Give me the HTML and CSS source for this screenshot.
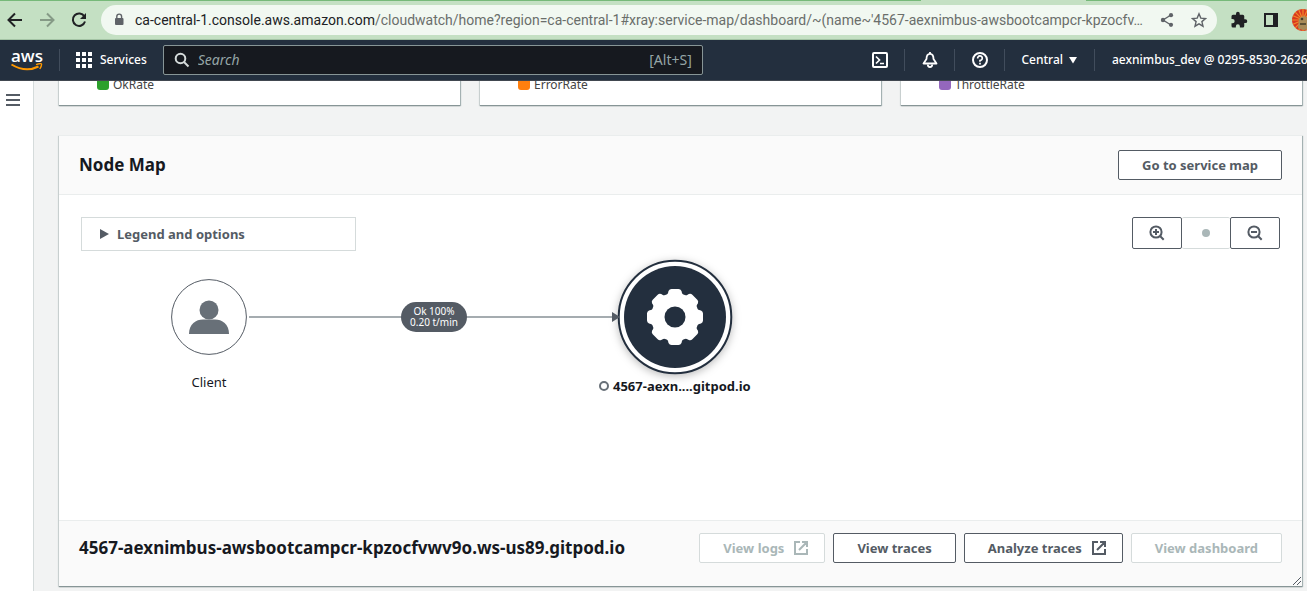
FILE: index.html
```html
<!DOCTYPE html>
<html lang="en">
<head>
<meta charset="utf-8">
<title>CloudWatch – Node Map</title>
<link rel="stylesheet" href="styles.css">
</head>
<body>
<div class="tabstrip"><span class="active-tab"></span></div>
<div class="toolbar">
  <button class="tool" aria-label="Back"><svg width="20" height="20" viewBox="0 0 20 20"><path d="M17 10H4M10 3.5 3.5 10l6.500 6.500" fill="none" stroke="#202124" stroke-width="2"/></svg></button>
  <button class="tool" aria-label="Forward"><svg width="20" height="20" viewBox="0 0 20 20"><path d="M3 10h13M10 3.500 16.500 10 10 16.500" fill="none" stroke="#859a86" stroke-width="2"/></svg></button>
  <button class="tool" aria-label="Reload"><svg width="20" height="20" viewBox="0 0 20 20"><path d="M15.400 6.500A6.200 6.200 0 1 0 16 11.500" fill="none" stroke="#202124" stroke-width="2"/><path d="M17 3v6h-6z" fill="#202124"/></svg></button>
  <div class="omnibox">
    <svg width="12" height="14" viewBox="0 0 12 14"><rect x="2" y="5" width="8.500" height="7" rx="1" fill="#5f6368"/><path d="M3.800 6V3.500a2.400 2.400 0 0 1 4.800 0V6" fill="none" stroke="#5f6368" stroke-width="1.400"/></svg>
    <a class="url" href="#"><span class="host">ca-central-1.console.aws.amazon.com</span>/cloudwatch/home?region=ca-central-1#xray:service-map/dashboard/~(name~'4567-aexnimbus-awsbootcampcr-kpzocfv…</a>
    <button class="tool" aria-label="Share"><svg width="16" height="16" viewBox="0 0 16 16" fill="#5f6368"><path d="M12 3 4 8l8 5" fill="none" stroke="#5f6368" stroke-width="1.400"/><circle cx="12" cy="3.200" r="2.100"/><circle cx="4" cy="8" r="2.200"/><circle cx="12" cy="12.800" r="2.100"/></svg></button>
    <button class="tool" aria-label="Bookmark"><svg width="16" height="16" viewBox="0 0 16 16"><path d="m8 1.800 1.800 4.300 4.700.4-3.600 3.100 1.100 4.600L8 11.800l-4 2.400 1.100-4.600L1.500 6.500l4.700-.4z" fill="none" stroke="#5f6368" stroke-width="1.400"/></svg></button>
  </div>
  <button class="tool" aria-label="Extensions"><svg width="18" height="18" viewBox="0 0 24 24"><path d="M20.500 11H19V7a2 2 0 0 0-2-2h-4V3.500a2.500 2.500 0 0 0-5 0V5H4a2 2 0 0 0-2 2v3.800h1.500a2.700 2.700 0 0 1 0 5.400H2V20a2 2 0 0 0 2 2h3.800v-1.500a2.700 2.700 0 0 1 5.400 0V22H17a2 2 0 0 0 2-2v-4h1.500a2.500 2.500 0 0 0 0-5" fill="#202124"/></svg></button>
  <button class="tool" aria-label="Side panel"><svg width="14" height="14" viewBox="0 0 14 14"><rect x="1" y="1" width="12" height="12" fill="none" stroke="#202124" stroke-width="2"/><path d="M9 1h4v12H9z" fill="#202124"/></svg></button>
  <button class="tool avatar" aria-label="Profile"><svg width="22" height="22" viewBox="0 0 22 22"><circle cx="11" cy="11" r="11" fill="#d9371f"/><g stroke="#f08a28" stroke-width="1.200"><path d="M11 0v22M0 11h22M3.200 3.200l15.600 15.600M18.800 3.200 3.200 18.800M6.800 1l8.400 20M15.200 1 6.800 21M1 6.800l20 8.400M1 15.200l20-8.400"/></g><path d="M7 10a5 5 0 0 1 9 0l1 9q-5 4-11 0z" fill="#a98b58"/><circle cx="10" cy="10" r="1.300" fill="#443b29"/><path d="M8 15h6" stroke="#5e5135" stroke-width="2"/></svg></button>
</div>

<header class="nav">
  <a class="logo" href="#" aria-label="AWS home"><span>aws</span><svg width="34" height="9" viewBox="0 0 34 9" fill="none" stroke="#ff9900"><path d="M1.500 1.500q14 8.500 27 2" stroke-width="2"/><path d="M26 1.600q5-1.600 5.500-.6t-1.700 5" stroke-width="1.400"/></svg></a>
  <button class="services"><svg width="16" height="16" viewBox="0 0 16 16" fill="#fff"><path d="M0 0h4v4H0zM6 0h4v4H6zM12 0h4v4h-4zM0 6h4v4H0zM6 6h4v4H6zM12 6h4v4h-4zM0 12h4v4H0zM6 12h4v4H6zM12 12h4v4h-4z"/></svg>Services</button>
  <label class="search"><svg width="16" height="16" viewBox="0 0 16 16" fill="none" stroke="#d5dbdb" stroke-width="2"><circle cx="6.500" cy="6.500" r="4.800"/><path d="m10 10 4.500 4.500"/></svg><input type="text" placeholder="Search" aria-label="Search"><span>[Alt+S]</span></label>
  <div class="nav-right">
    <button class="nav-icon" aria-label="CloudShell"><svg width="16" height="16" viewBox="0 0 16 16" fill="none" stroke="#fff" stroke-width="2"><rect x="1" y="1" width="14" height="14" rx="1"/><path d="M4 4.500 7.500 8 4 11.500M8 11.500h4" stroke-width="1.700"/></svg></button>
    <button class="nav-icon" aria-label="Notifications"><svg width="16" height="16" viewBox="0 0 16 16" fill="none" stroke="#fff" stroke-width="1.800" stroke-linejoin="round"><path d="M8 1.800C5.500 1.800 4.500 4 4.500 7L1.500 11.500h13L11.500 7c0-3-1-5.200-3.500-5.200z"/><path d="M8 0v2M5.800 12.500a2.200 2.500 0 0 0 4.400 0"/></svg></button>
    <button class="nav-icon" aria-label="Help"><svg width="16" height="16" viewBox="0 0 16 16" fill="none" stroke="#fff" stroke-width="2"><circle cx="8" cy="8" r="7"/><path d="M5.700 6.500A2.300 2.300 0 1 1 8 8.500v1.200M8 10.800v1.700" stroke-width="1.700"/></svg></button>
    <button class="region">Central<svg width="10" height="8" viewBox="0 0 10 8"><path d="M1 1h8L5 7.500z" fill="#fff"/></svg></button>
    <button class="account">aexnimbus_dev @ 0295-8530-2626</button>
  </div>
</header>

<div class="page">
  <aside class="side"><button aria-label="Open navigation"><svg width="14" height="12" viewBox="0 0 14 12"><path d="M0 1h14M0 6h14M0 11h14" stroke="#545b64" stroke-width="2"/></svg></button></aside>
  <main>
    <div class="metrics">
      <div class="metric"><i class="swatch green"></i>OkRate</div>
      <div class="metric"><i class="swatch orange"></i>ErrorRate</div>
      <div class="metric"><i class="swatch purple"></i>ThrottleRate</div>
    </div>
    <section class="panel">
      <div class="panel-head"><h2>Node Map</h2><button class="btn">Go to service map</button></div>
      <div class="map">
        <div class="map-tools">
          <button class="legend"><svg width="9" height="10" viewBox="0 0 9 10"><path d="M0 0v10l9-5z" fill="#545b64"/></svg>Legend and options</button>
          <div class="zoom">
            <button aria-label="Zoom in"><svg width="16" height="16" viewBox="0 0 16 16" fill="none" stroke="#545b64" stroke-width="2"><circle cx="7" cy="7" r="5.600"/><path d="m11 11 3.700 3.700M4 7h6M7 4v6"/></svg></button>
            <button class="reset" disabled aria-label="Reset zoom"><svg width="8" height="8"><circle cx="4" cy="4" r="4" fill="#aab7b8"/></svg></button>
            <button aria-label="Zoom out"><svg width="16" height="16" viewBox="0 0 16 16" fill="none" stroke="#545b64" stroke-width="2"><circle cx="7" cy="7" r="5.600"/><path d="m11 11 3.700 3.700M4 7h6"/></svg></button>
          </div>
        </div>
        <div class="node client">
          <svg width="76" height="76" viewBox="0 0 76 76"><circle cx="38" cy="38" r="37.400" fill="#fff" stroke="#545b64"/><g fill="#687078"><circle cx="38" cy="31" r="9.500"/><path d="M18 55c0-10 7-14.500 14-14.500h12c7 0 14 4.500 14 14.500z"/></g></svg>
          <span>Client</span>
        </div>
        <div class="node service">
          <svg width="124" height="124" viewBox="-62 -62 124 124"><circle r="56.300" fill="#fff" stroke="#232f3e" stroke-width="2"/><circle r="51" fill="#232f3e"/>
            <g fill="#fff"><circle r="24"/><g id="teeth"><path id="tooth" d="M-10-21q3-1 3.500-5 1-2 3-2h7q2 0 3 2 .5 4 3.500 5v42q-3 1-3.500 5-1 2-3 2h-7q-2 0-3-2-.5-4-3.500-5z"/><use href="#tooth" transform="rotate(90)"/></g><use href="#teeth" transform="rotate(45)"/></g><circle r="10.500" fill="#232f3e"/></svg>
          <strong><i></i>4567-aexn....gitpod.io</strong>
        </div>
        <svg class="edge" width="371" height="10" viewBox="0 0 371 10"><path d="M0 5h364" stroke="#879196" stroke-width="1.500"/><path d="M363 0v10l8-5z" fill="#545b64"/></svg>
        <div class="edge-label">Ok 100%<br>0.20 t/min</div>
      </div>
      <div class="panel-foot">
        <h2>4567-aexnimbus-awsbootcampcr-kpzocfvwv9o.ws-us89.gitpod.io</h2>
        <div class="actions">
          <button class="btn with-icon" disabled>View logs<svg width="14" height="14" viewBox="0 0 14 14" fill="none" stroke="currentColor" stroke-width="2"><path d="M6 1H1v12h12V8M8 1h5v5M13 1 5 9"/></svg></button>
          <button class="btn">View traces</button>
          <button class="btn with-icon">Analyze traces<svg width="14" height="14" viewBox="0 0 14 14" fill="none" stroke="currentColor" stroke-width="2"><path d="M6 1H1v12h12V8M8 1h5v5M13 1 5 9"/></svg></button>
          <button class="btn" disabled>View dashboard</button>
        </div>
      </div>
      <svg class="grip" width="8" height="8" viewBox="0 0 8 8"><path d="M0 8 8 0M4 8l4-4" stroke="#545b64"/></svg>
    </section>
  </main>
</div>
</body>
</html>
```

FILE: styles.css
```css
* { box-sizing: border-box; }
body {
  margin: 0;
  min-height: 100vh;
  display: flex;
  flex-direction: column;
  overflow: hidden;
  background: #f2f3f3;
  color: #16191f;
  font: 13px/20px "Noto Sans", sans-serif;
}
button { font: inherit; color: inherit; background: none; border: 0; padding: 0; }
svg { display: block; flex: none; }
h2 { margin: 0; font: 700 17px/24px "Noto Sans", sans-serif; }

.tabstrip { height: 1px; background: #76b979; display: flex; justify-content: flex-end; padding-right: 221px; }
.active-tab { width: 165px; background: #c4e0c3; }
.toolbar { height: 39px; display: flex; align-items: center; padding-left: 5px; background: #c4e0c3; border-bottom: 1px solid #a3c3a4; gap: 12px; }
.tool { display: grid; place-items: center; flex: none; width: 20px; height: 30px; }
.omnibox { flex: 1; min-width: 0; height: 30px; border-radius: 15px; background: #f1f8f1; display: flex; align-items: center; gap: 12px; padding: 0 8px 0 12px; }
.url { flex: 1; min-width: 0; overflow: hidden; white-space: nowrap; color: #6a6e6b; text-decoration: none; font: 14px/20px Roboto, sans-serif; margin-left: -2px; }
.host { color: #202124; }
.avatar { width: 15px; overflow: hidden; justify-content: start; margin-left: -1px; }

.nav { height: 41px; display: flex; align-items: center; background: #232f3e; color: #fff; font-size: 12px; border-bottom: 1px solid #414750; position: relative; z-index: 2; }
.logo { width: 60px; padding-left: 10px; height: 22px; border-right: 1px solid #414d5c; color: #fff; text-decoration: none; flex: none; }
.logo span { display: block; font: 600 17px/14px "Open Sans", sans-serif; padding-left: 1px; }
.services { display: flex; align-items: center; gap: 8px; padding: 0 16px; font-weight: 500; }
.search { flex: 0 1 540px; min-width: 0; height: 30px; display: flex; align-items: center; gap: 6px; padding: 0 10px; background: #16191f; border: 1px solid #879596; border-radius: 2px; color: #95a5a6; font-size: 14px; }
.search input { flex: 1; min-width: 0; border: 0; outline: 0; background: none; color: #fff; font: 14px/20px "Noto Sans", sans-serif; }
.search input::placeholder { color: #95a5a6; font-style: italic; opacity: 1; }
.nav-right { margin-left: auto; display: flex; align-items: center; font-weight: 500; }
.nav-right button { height: 22px; white-space: nowrap; }
.nav-icon { width: 50px; display: grid; place-items: center; border-right: 1px solid #414d5c; }
.region { display: flex; align-items: center; gap: 5px; padding: 0 16px; border-right: 1px solid #414d5c; }
.account { width: 212px; overflow: hidden; text-align: left; padding-left: 17px; }

.page { flex: 1; display: flex; }
.side { width: 34px; flex: none; background: #fff; border-right: 1px solid #d5dbdb; padding: 10px 6px; }
main { flex: 1; min-width: 0; padding: 0 5px 4px 25px; }
.metrics { display: grid; grid-template-columns: repeat(3, 1fr); gap: 20px; margin-top: -10px; }
.metric, .panel { background: #fff; box-shadow: 0 1px 1px #879596, 1px 1px 1px #aab7b8, -1px 1px 1px #d5dbdb; }
.metric { height: 34px; padding-left: 38px; display: flex; align-items: flex-start; gap: 4px; font-size: 12px; line-height: 27px; color: #444; }
.swatch { width: 12px; height: 12px; border-radius: 3px; margin-top: 7px; }
.green { background: #2ca02c; }
.orange { background: #ff7f0e; }
.purple { background: #9467bd; }
.panel { margin-top: 30px; position: relative; border-top: 1px solid #eaeded; }
.panel-head, .panel-foot { display: flex; align-items: center; justify-content: space-between; background: #fafafa; padding: 0 20px; }
.panel-head { height: 59px; border-bottom: 1px solid #eaeded; }
.panel-foot { height: 66px; border-top: 1px solid #eaeded; padding-bottom: 11px; }
.btn { height: 30px; padding: 0 23px; display: flex; align-items: center; gap: 10px; border: 1px solid #545b64; border-radius: 2px; background: #fff; color: #545b64; font-weight: 700; white-space: nowrap; }
.with-icon { padding-right: 16px; }
.btn:disabled { color: #aab7b8; border-color: #d5dbdb; }
.actions { display: flex; gap: 8px; }

.map { height: 325px; position: relative; background: #fff; padding: 22px; }
.map-tools { display: flex; justify-content: space-between; }
.legend { width: 275px; height: 34px; border: 1px solid #d5dbdb; display: flex; align-items: center; gap: 8px; padding-left: 18px; font-weight: 700; color: #545b64; }
.zoom { display: flex; height: 32px; }
.zoom button { width: 50px; display: grid; place-items: center; border: 1px solid #545b64; border-radius: 2px; }
.zoom .reset { width: 48px; border-color: #d5dbdb; border-width: 1px 0; }
.edge { position: absolute; left: 190px; top: 117px; }
.edge-label { position: absolute; left: 342px; top: 107px; width: 66px; height: 30px; border-radius: 15px; padding-top: 4px; background: #545b64; color: #fff; text-align: center; font-size: 10px; line-height: 11px; white-space: nowrap; }
.node { position: absolute; display: flex; flex-direction: column; align-items: center; white-space: nowrap; }
.client { left: 112px; top: 84px; gap: 17px; }
.service { left: 540px; top: 60px; }
.service svg { filter: drop-shadow(0 2px 4px #0004); }
.service strong { display: flex; align-items: center; gap: 4px; line-height: 14px; }
.service i { width: 10px; height: 10px; border: 2px solid #687078; border-radius: 50%; }
.grip { position: absolute; right: 1px; bottom: 1px; }
```
